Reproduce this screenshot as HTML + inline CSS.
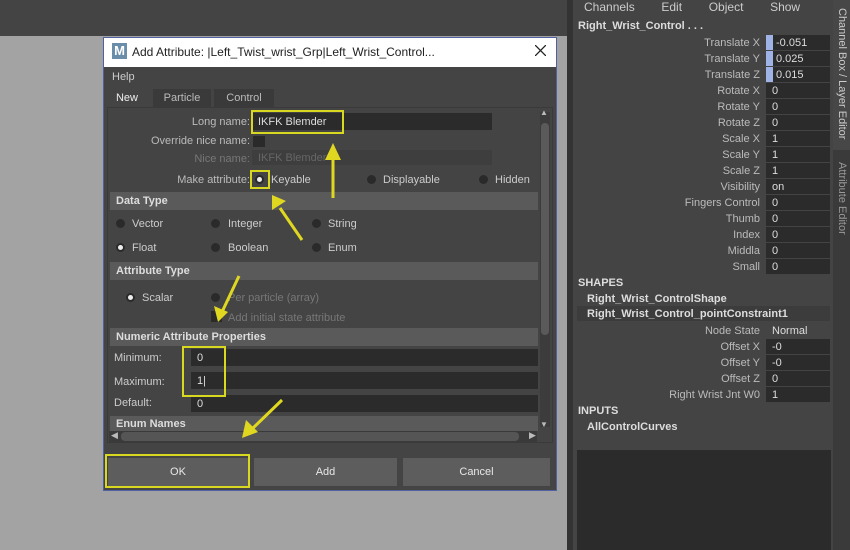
<!DOCTYPE html>
<html><head><style>
*{margin:0;padding:0;box-sizing:border-box}
body{width:850px;height:550px;background:#a3a3a3;font-family:"Liberation Sans",sans-serif;font-size:11px;color:#ccc;position:relative;overflow:hidden}
.a{position:absolute}
.lbl{position:absolute;text-align:right;color:#bbb;font-size:11px}
.fld{position:absolute;background:#2b2b2b;color:#ddd;padding-left:6px;font-size:11px;display:flex;align-items:center;padding-top:1px}
.rad{position:absolute;width:9px;height:9px;border-radius:50%;background:#2a2a2a}
.rad.on::after{content:"";position:absolute;left:2px;top:2px;width:5px;height:5px;border-radius:50%;background:#eee}
.sec{position:absolute;left:110px;width:428px;height:18px;background:#5a5a5a;color:#ddd;font-weight:bold;padding-left:6px;line-height:18px}
.yb{position:absolute;border:2px solid #d8d820}
.btn{position:absolute;top:458px;height:28px;background:#5d5d5d;color:#e8e8e8;text-align:center;line-height:28px;font-size:11px}
</style></head><body>
<div class="a" style="left:0;top:0;width:567px;height:36px;background:#444"></div>
<div class="a" style="left:567px;top:0;width:6px;height:550px;background:#333"></div>
<div class="a" style="left:573px;top:0;width:277px;height:550px;background:#444"></div>
<div class="a" style="left:833px;top:0;width:17px;height:550px;background:#3a3a3a"></div>
<div class="a" style="left:833px;top:0;width:17px;height:150px;background:#474747"></div>
<div class="a" style="left:836px;top:8px;writing-mode:vertical-rl;color:#ccc;font-size:11px">Channel Box / Layer Editor</div>
<div class="a" style="left:836px;top:162px;writing-mode:vertical-rl;color:#999;font-size:11px">Attribute Editor</div>
<div class="a" style="left:584px;top:0;color:#ccc;font-size:12px;word-spacing:10px">Channels&nbsp; Edit&nbsp; Object&nbsp; Show</div>
<div class="a" style="left:578px;top:20px;font-weight:bold;color:#ddd;font-size:11px">Right_Wrist_Control . . .</div>
<div id="cb"></div>
<div class="a" style="left:578px;top:277px;font-weight:bold;color:#ddd">SHAPES</div>
<div class="a" style="left:587px;top:293px;font-weight:bold;color:#ddd">Right_Wrist_ControlShape</div>
<div class="a" style="left:577px;top:306px;width:253px;height:15px;background:#3c3c3c"></div>
<div class="a" style="left:587px;top:308px;font-weight:bold;color:#ddd">Right_Wrist_Control_pointConstraint1</div>
<div class="a" style="left:578px;top:405px;font-weight:bold;color:#ddd">INPUTS</div>
<div class="a" style="left:587px;top:421px;font-weight:bold;color:#ddd">AllControlCurves</div>
<div class="a" style="left:577px;top:450px;width:254px;height:100px;background:#2b2b2b"></div>
<script>
var rows=[["Translate X","-0.051",1],["Translate Y","0.025",1],["Translate Z","0.015",1],["Rotate X","0"],["Rotate Y","0"],["Rotate Z","0"],["Scale X","1"],["Scale Y","1"],["Scale Z","1"],["Visibility","on"],["Fingers Control","0"],["Thumb","0"],["Index","0"],["Middla","0"],["Small","0"]];
var h="";rows.forEach(function(r,i){var y=35+i*16;h+='<div class="lbl" style="left:600px;width:160px;top:'+(y+2)+'px">'+r[0]+'</div><div class="fld" style="left:766px;top:'+y+'px;width:64px;height:15px;'+(r[2]?'border-left:7px solid #9fb3e6;padding-left:3px':'')+'">'+r[1]+'</div>';});
var r2=[["Node State","Normal",1],["Offset X","-0"],["Offset Y","-0"],["Offset Z","0"],["Right Wrist Jnt W0","1"]];
r2.forEach(function(r,i){var y=323+i*16;h+='<div class="lbl" style="left:600px;width:160px;top:'+(y+2)+'px">'+r[0]+'</div><div class="fld" style="left:766px;top:'+y+'px;width:64px;height:15px;'+(r[2]?'background:none':'')+'">'+r[1]+'</div>';});
document.getElementById("cb").outerHTML=h;
</script>
<div class="a" style="left:103px;top:37px;width:454px;height:454px;background:#444;border:1px solid #5060a0"></div>
<div class="a" style="left:104px;top:38px;width:452px;height:29px;background:#fff"></div>
<div class="a" style="left:112px;top:43px;width:15px;height:16px;background:#6a8eaa;color:#fff;font-weight:bold;font-size:13px;line-height:16px;text-align:center">M</div>
<div class="a" style="left:132px;top:45px;color:#222;font-size:12px">Add Attribute: |Left_Twist_wrist_Grp|Left_Wrist_Control...</div>
<svg class="a" style="left:535px;top:45px" width="11" height="11"><path d="M0 0L11 11M11 0L0 11" stroke="#222" stroke-width="1.3"/></svg>
<div class="a" style="left:112px;top:71px;color:#ccc">Help</div>
<div class="a" style="left:107px;top:89px;width:40px;height:18px;background:#444;color:#eee;text-align:center;line-height:18px">New</div>
<div class="a" style="left:153px;top:89px;width:58px;height:18px;background:#3a3a3a;color:#bbb;text-align:center;line-height:18px">Particle</div>
<div class="a" style="left:214px;top:89px;width:60px;height:18px;background:#3a3a3a;color:#bbb;text-align:center;line-height:18px">Control</div>
<div class="a" style="left:107px;top:107px;width:446px;height:336px;background:#444;border:1px solid #3a3a3a"></div>
<div class="a" style="left:540px;top:112px;width:10px;height:315px;background:#3c3c3c"></div>
<div class="a" style="left:541px;top:123px;width:8px;height:212px;background:#5a5a5a;border-radius:4px"></div>
<div class="lbl" style="left:150px;width:100px;top:116px">Long name:</div>
<div class="fld" style="left:252px;top:113px;width:240px;height:17px">IKFK Blemder</div>
<div class="lbl" style="left:130px;width:120px;top:135px">Override nice name:</div>
<div class="a" style="left:253px;top:136px;width:12px;height:11px;background:#2a2a2a"></div>
<div class="lbl" style="left:150px;width:100px;top:153px;color:#777">Nice name:</div>
<div class="fld" style="left:252px;top:150px;width:240px;height:15px;background:#3e3e3e;color:#666">IKFK Blemder</div>
<div class="lbl" style="left:150px;width:100px;top:174px">Make attribute:</div>
<div class="rad on" style="left:255px;top:175px"></div><div class="a" style="left:271px;top:174px">Keyable</div>
<div class="rad" style="left:367px;top:175px"></div><div class="a" style="left:383px;top:174px">Displayable</div>
<div class="rad" style="left:479px;top:175px"></div><div class="a" style="left:495px;top:174px">Hidden</div>
<div class="sec" style="top:192px">Data Type</div>
<div class="rad" style="left:116px;top:219px"></div><div class="a" style="left:132px;top:218px">Vector</div>
<div class="rad" style="left:211px;top:219px"></div><div class="a" style="left:228px;top:218px">Integer</div>
<div class="rad" style="left:312px;top:219px"></div><div class="a" style="left:328px;top:218px">String</div>
<div class="rad on" style="left:116px;top:243px"></div><div class="a" style="left:132px;top:242px">Float</div>
<div class="rad" style="left:211px;top:243px"></div><div class="a" style="left:228px;top:242px">Boolean</div>
<div class="rad" style="left:312px;top:243px"></div><div class="a" style="left:328px;top:242px">Enum</div>
<div class="sec" style="top:262px">Attribute Type</div>
<div class="rad on" style="left:126px;top:293px"></div><div class="a" style="left:142px;top:292px">Scalar</div>
<div class="rad" style="left:211px;top:293px"></div><div class="a" style="left:228px;top:292px;color:#777">Per particle (array)</div>
<div class="a" style="left:211px;top:311px;width:11px;height:11px;background:#2a2a2a"></div><div class="a" style="left:228px;top:312px;color:#777">Add initial state attribute</div>
<div class="sec" style="top:328px">Numeric Attribute Properties</div>
<div class="a" style="left:114px;top:352px">Minimum:</div>
<div class="fld" style="left:191px;top:349px;width:347px;height:17px">0</div>
<div class="a" style="left:114px;top:376px">Maximum:</div>
<div class="fld" style="left:191px;top:372px;width:347px;height:17px">1|</div>
<div class="a" style="left:114px;top:397px">Default:</div>
<div class="fld" style="left:191px;top:395px;width:347px;height:17px">0</div>
<div class="sec" style="top:416px;height:15px;line-height:17px">Enum Names</div>
<div class="a" style="left:109px;top:431px;width:428px;height:11px;background:#3a3a3a"></div>
<div class="a" style="left:121px;top:432px;width:398px;height:9px;background:#555;border-radius:4px"></div>
<div class="a" style="left:111px;top:430px;color:#bbb;font-size:9px">◀</div>
<div class="a" style="left:529px;top:430px;color:#bbb;font-size:9px">▶</div>
<div class="a" style="left:540px;top:108px;color:#bbb;font-size:8px">▲</div>
<div class="a" style="left:540px;top:420px;color:#bbb;font-size:8px">▼</div>
<div class="btn" style="left:108px;width:140px">OK</div>
<div class="btn" style="left:254px;width:143px">Add</div>
<div class="btn" style="left:403px;width:147px">Cancel</div>
<div class="yb" style="left:251px;top:110px;width:93px;height:24px"></div>
<div class="yb" style="left:250px;top:170px;width:20px;height:19px"></div>
<div class="yb" style="left:182px;top:346px;width:44px;height:51px"></div>
<div class="yb" style="left:105px;top:454px;width:145px;height:34px"></div>
<svg class="a" style="left:0;top:0" width="850" height="550">
<g stroke="#e0d820" stroke-width="3" fill="#e0d820">
<line x1="333" y1="198" x2="333" y2="158"/><polygon points="325,160 341,160 333,143" stroke="none"/>
<line x1="302" y1="240" x2="280" y2="208"/><polygon points="272,210 286,201 272,195" stroke="none"/>
<line x1="239" y1="276" x2="222" y2="312"/><polygon points="214,306 228,312 218,322" stroke="none"/>
<line x1="282" y1="400" x2="253" y2="428"/><polygon points="246,420 258,432 242,438" stroke="none"/>
</g></svg>
</body></html>
